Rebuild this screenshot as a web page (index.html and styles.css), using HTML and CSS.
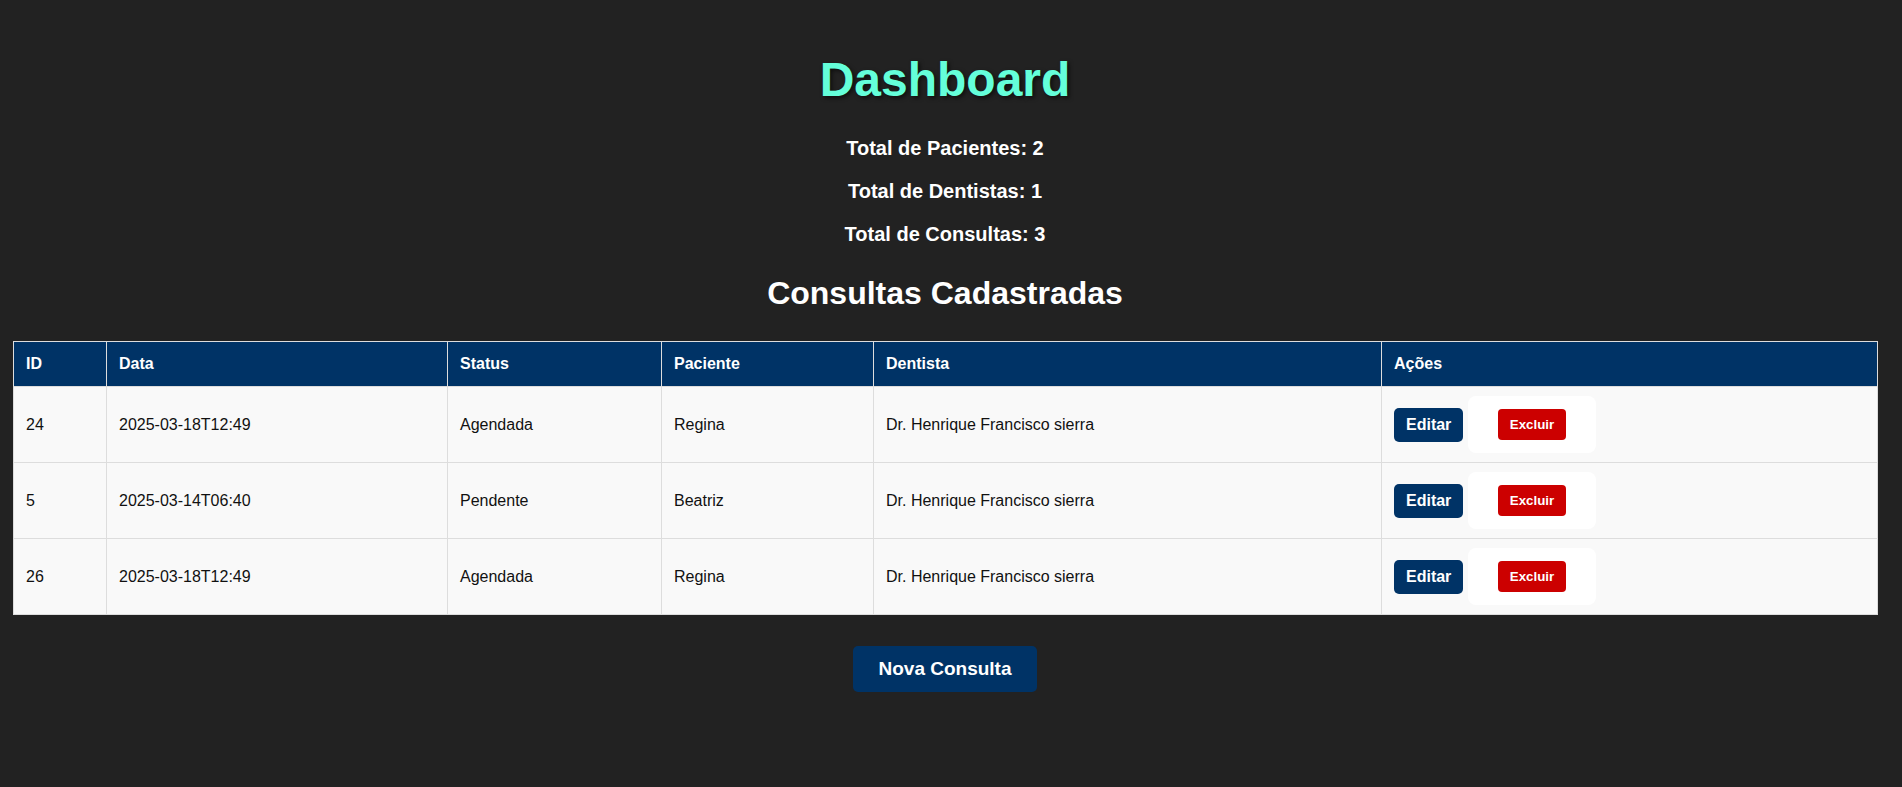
FILE: index.html
```html
<!DOCTYPE html>
<html lang="pt">
<head>
<meta charset="utf-8">
<title>Dashboard</title>
<link rel="stylesheet" href="styles.css">
</head>
<body>
<main class="page">
  <h1 class="title">Dashboard</h1>
  <p class="stat">Total de Pacientes: 2</p>
  <p class="stat">Total de Dentistas: 1</p>
  <p class="stat">Total de Consultas: 3</p>
  <h2 class="subtitle">Consultas Cadastradas</h2>
  <table class="grid">
    <colgroup>
      <col class="c-id"><col class="c-data"><col class="c-status"><col class="c-pac"><col class="c-dent"><col class="c-acoes">
    </colgroup>
    <thead>
      <tr><th>ID</th><th>Data</th><th>Status</th><th>Paciente</th><th>Dentista</th><th>Ações</th></tr>
    </thead>
    <tbody>
      <tr>
        <td>24</td><td>2025-03-18T12:49</td><td>Agendada</td><td>Regina</td><td>Dr. Henrique Francisco sierra</td>
        <td class="actions"><a class="btn-edit">Editar</a> <form class="del-form"><button type="button" class="btn-del">Excluir</button></form></td>
      </tr>
      <tr>
        <td>5</td><td>2025-03-14T06:40</td><td>Pendente</td><td>Beatriz</td><td>Dr. Henrique Francisco sierra</td>
        <td class="actions"><a class="btn-edit">Editar</a> <form class="del-form"><button type="button" class="btn-del">Excluir</button></form></td>
      </tr>
      <tr>
        <td>26</td><td>2025-03-18T12:49</td><td>Agendada</td><td>Regina</td><td>Dr. Henrique Francisco sierra</td>
        <td class="actions"><a class="btn-edit">Editar</a> <form class="del-form"><button type="button" class="btn-del">Excluir</button></form></td>
      </tr>
    </tbody>
  </table>
  <div class="footer">
    <a class="btn-new">Nova Consulta</a>
  </div>
</main>
</body>
</html>
```

FILE: styles.css
```css
html, body {
  margin: 0;
  padding: 0;
  background: #222222;
}
body {
  font-family: "Liberation Sans", Arial, sans-serif;
  color: #ffffff;
}
.page {
  margin-left: 13px;
  width: 1864px;
  text-align: center;
  padding-top: 52px;
}
.title {
  margin: 0 0 30px;
  font-size: 48px;
  font-weight: bold;
  color: #64ffda;
  text-shadow: 2px 2px 4px rgba(0, 0, 0, 0.6);
}
.stat {
  margin: 20px 0;
  font-size: 20px;
  font-weight: bold;
}
.stat:first-of-type {
  margin-top: 0;
}
.subtitle {
  margin: 29px 0 29px;
  font-size: 32px;
  font-weight: bold;
}
.grid {
  width: 1864px;
  table-layout: fixed;
  border-collapse: collapse;
  text-align: left;
  background: #f9f9f9;
  color: #111111;
  font-size: 16px;
}
.c-id { width: 93px; }
.c-data { width: 341px; }
.c-status { width: 214px; }
.c-pac { width: 212px; }
.c-dent { width: 508px; }
.c-acoes { width: 496px; }
.grid th, .grid td {
  border: 1px solid #dddddd;
}
.grid th {
  background: #003366;
  color: #ffffff;
  font-weight: bold;
  padding: 13px 12px 13px;
}
.grid td {
  padding: 9px 12px;
  vertical-align: middle;
}
.btn-edit {
  display: inline-block;
  vertical-align: middle;
  background: #003366;
  color: #ffffff;
  font-weight: bold;
  font-size: 16px;
  padding: 8px 12px;
  border-radius: 5px;
  line-height: 18px;
}
.del-form {
  display: inline-flex;
  vertical-align: middle;
  margin: 0;
  padding: 13px 30px;
  background: #ffffff;
  border-radius: 8px;
}
.btn-del {
  display: block;
  margin: 0;
  border: none;
  background: #cc0000;
  color: #ffffff;
  font-family: "Liberation Sans", Arial, sans-serif;
  font-weight: bold;
  font-size: 13.333px;
  line-height: 15px;
  padding: 8px 12px;
  border-radius: 4px;
}
.footer {
  padding-top: 31px;
}
.btn-new {
  display: inline-block;
  background: #003366;
  color: #ffffff;
  font-weight: bold;
  font-size: 19px;
  line-height: 22px;
  padding: 12px 25px;
  border-radius: 5px;
}
```
